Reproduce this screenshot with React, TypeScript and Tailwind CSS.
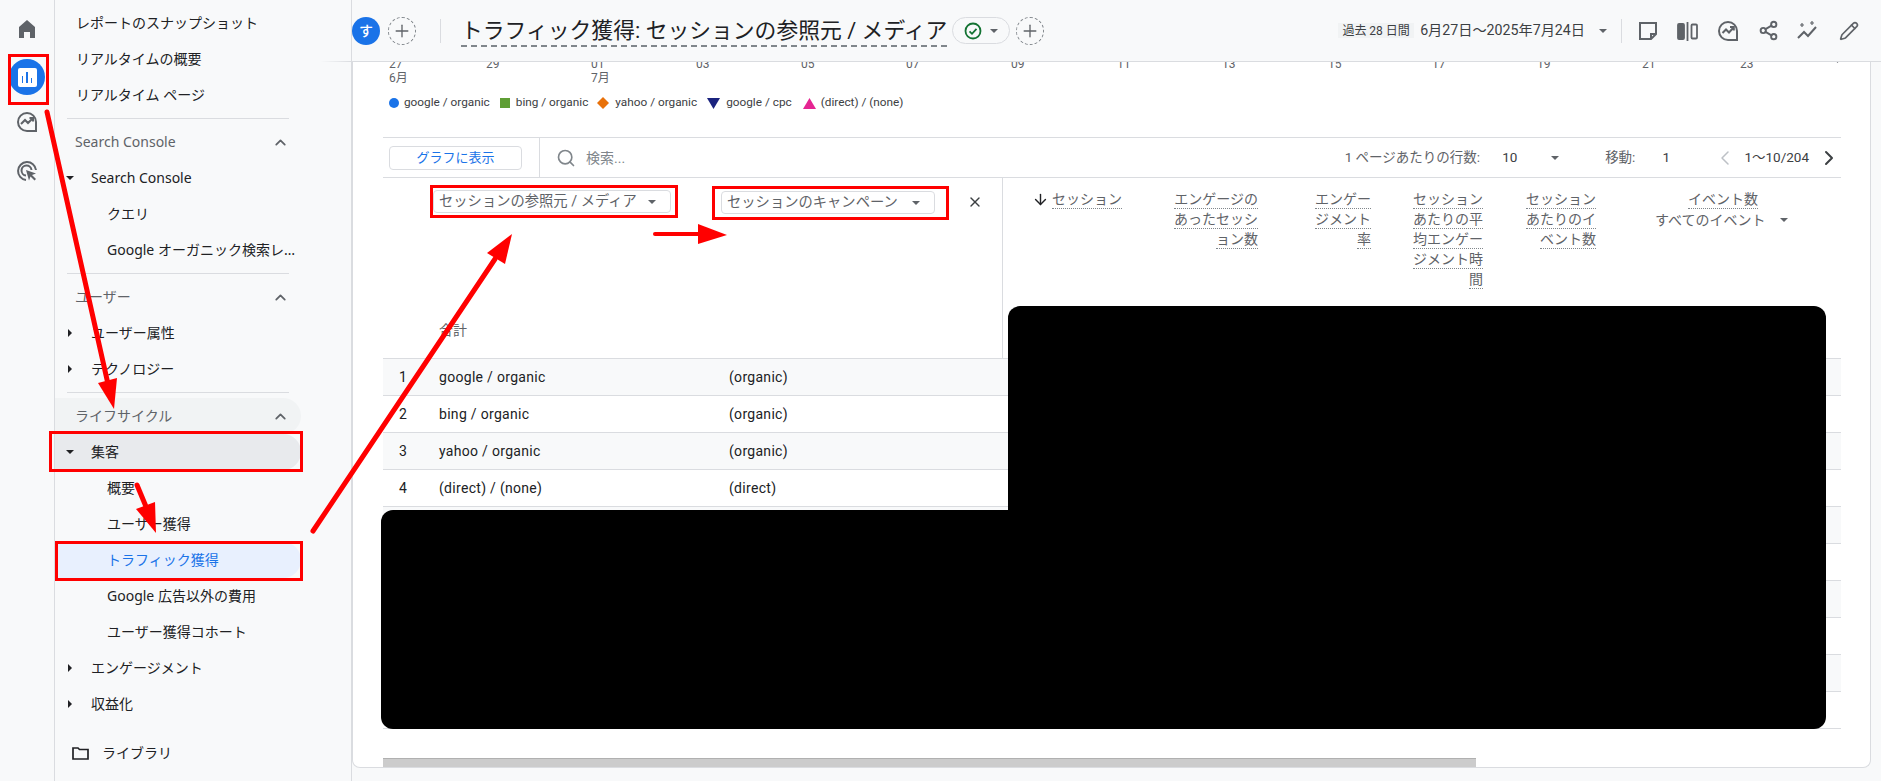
import { ArrowDown, ChevronDown, ChevronLeft, ChevronRight, ChevronUp, Pencil, Plus, Search, Share2, X } from "lucide-react";

const Caret = ({ right = false, cls = "text-[#5f6368]" }: { right?: boolean; cls?: string }) => (
  <svg width="10" height="10" viewBox="0 0 10 10" className={`shrink-0 ${cls}`}>
    {right ? <path d="M3 1l4 4-4 4z" fill="currentColor" /> : <path d="M1 3h8L5 7z" fill="currentColor" />}
  </svg>
);

function Row({ text, level = 0, caret, cls = "" }: { text: string; level?: number; caret?: "down" | "right"; cls?: string }) {
  return (
    <div className={`flex h-9 w-[246px] items-center rounded-r-full text-sm text-[#202124] ${cls}`}>
      {caret ? (
        <span className="ml-[10px] w-[26px]">
          <Caret right={caret === "right"} cls="text-[#202124]" />
        </span>
      ) : (
        <span className={level === 2 ? "w-[52px]" : "w-[21px]"} />
      )}
      <span className="truncate">{text}</span>
    </div>
  );
}

function Section({ text, cls = "" }: { text: string; cls?: string }) {
  return (
    <div className={`flex h-9 w-[246px] items-center justify-between rounded-r-full pl-[20px] pr-[12px] text-sm text-[#5f6368] ${cls}`}>
      <span>{text}</span>
      <ChevronUp size={17} strokeWidth={2.5} />
    </div>
  );
}

const Divider = () => <div className="my-[5px] ml-[12px] h-px w-[222px] bg-[#dadce0]" />;

function Sidebar() {
  return (
    <nav className="h-full w-[297px] shrink-0 border-r border-[#dadce0] pt-[5px]">
      <Row text="レポートのスナップショット" />
      <Row text="リアルタイムの概要" />
      <Row text="リアルタイム ページ" />
      <Divider />
      <Section text="Search Console" />
      <Row text="Search Console" caret="down" />
      <Row text="クエリ" level={2} />
      <div className="flex h-9 items-center pl-[52px] text-sm text-[#202124]">
        <span className="w-[189px] truncate">Google オーガニック検索レポート</span>
      </div>
      <Divider />
      <Section text="ユーザー" />
      <Row text="ユーザー属性" caret="right" />
      <Row text="テクノロジー" caret="right" />
      <Divider />
      <Section text="ライフサイクル" cls="bg-[#f1f3f4]" />
      <Row text="集客" caret="down" cls="bg-[#e8eaed]" />
      <Row text="概要" level={2} />
      <Row text="ユーザー獲得" level={2} />
      <Row text="トラフィック獲得" level={2} cls="bg-[#e8f0fe] !text-[#1a73e8]" />
      <Row text="Google 広告以外の費用" level={2} />
      <Row text="ユーザー獲得コホート" level={2} />
      <Row text="エンゲージメント" caret="right" />
      <Row text="収益化" caret="right" />
      <div className="mt-[13px] flex h-9 items-center pl-[17px] text-sm text-[#202124]">
        <svg width="17" height="14" viewBox="0 0 17 14" fill="none" stroke="#202124" strokeWidth="1.7">
          <path d="M1 2h5l1.5 1.5H16V13H1z" />
        </svg>
        <span className="ml-[13px]">ライブラリ</span>
      </div>
    </nav>
  );
}

function Rail() {
  return (
    <aside className="flex h-full w-[55px] shrink-0 flex-col items-center border-r border-[#dadce0]">
      <svg width="24" height="24" viewBox="0 0 24 24" className="mt-[17px]" fill="#5f6368">
        <path d="M4 21V10l8-7 8 7v11h-5v-6H9v6z" />
      </svg>
      <div className="mt-[18px] flex h-[36px] w-[36px] items-center justify-center rounded-full bg-[#1a73e8]">
        <div className="flex h-[19px] w-[19px] items-end justify-center gap-[3px] rounded-[2px] bg-white pb-[4px]">
          <span className="h-[7px] w-[1.5px] bg-[#1a73e8]" />
          <span className="h-[11px] w-[1.5px] bg-[#1a73e8]" />
          <span className="h-[5px] w-[1.5px] bg-[#1a73e8]" />
        </div>
      </div>
      <svg width="24" height="24" viewBox="0 0 24 24" className="mt-[15px]" fill="none" stroke="#5f6368" strokeWidth="2">
        <path d="M21 20v-8a9 9 0 1 0-9 9h9z" />
        <path d="M6 14l4-4 3 3 5-5M14.500 8H18v3.500" />
      </svg>
      <svg width="24" height="24" viewBox="0 0 24 24" className="mt-[25px]" fill="none" stroke="#5f6368" strokeWidth="2">
        <path d="M21 11a9 9 0 1 0-10 10" />
        <path d="M16.500 11a5 5 0 1 0-5.500 5.500" />
        <path d="M11 11l10 3.500-4 1.500 4 4-1.500 1.500-4-4-1.500 4z" fill="#5f6368" stroke="none" />
      </svg>
    </aside>
  );
}

function DashedPlus() {
  return (
    <div className="flex h-[28px] w-[28px] shrink-0 items-center justify-center rounded-full border border-dashed border-[#80868b] text-[#5f6368]">
      <Plus size={20} strokeWidth={1.6} />
    </div>
  );
}

function Header() {
  return (
    <header className="relative flex h-[62px] shrink-0 items-center border-b border-[#dadce0] pr-[22px]">
      <div className="absolute -left-[32px] -bottom-px h-px w-[32px] bg-gradient-to-r from-transparent to-[#dadce0]" />
      <div className="flex h-[28px] w-[28px] shrink-0 items-center justify-center rounded-full bg-[#1a73e8] text-sm font-medium text-white">す</div>
      <div className="ml-[8px]">
        <DashedPlus />
      </div>
      <div className="ml-[24px] h-[24px] w-px bg-[#dadce0]" />
      <h1 className="ml-[20px] mt-[2px] border-b-2 border-dashed border-[#80868b] text-[21.8px] leading-[28px] whitespace-nowrap text-[#202124]">
        トラフィック獲得: セッションの参照元 / メディア
      </h1>
      <div className="ml-[5px] flex h-[27px] w-[58px] items-center justify-center gap-[7px] rounded-full border border-[#dadce0]">
        <svg width="18" height="18" viewBox="0 0 18 18" fill="none" stroke="#137333" strokeWidth="1.8">
          <circle cx="9" cy="9" r="7.500" />
          <path d="M5.500 9.300l2.500 2.500 4.500-5" />
        </svg>
        <Caret />
      </div>
      <div className="ml-[6px]">
        <DashedPlus />
      </div>
      <div className="ml-auto flex items-center">
        <span className="flex h-[15px] w-[76px] items-center justify-center bg-[#f1f3f4] text-xs text-[#3c4043]">過去 28 日間</span>
        <span className="ml-[6px] whitespace-nowrap text-[14.2px] text-[#3c4043]">6月27日〜2025年7月24日</span>
        <span className="ml-[13px]">
          <Caret />
        </span>
        <div className="ml-[13px] h-[24px] w-px bg-[#dadce0]" />
        <svg width="20" height="20" viewBox="0 0 20 20" className="ml-[16px]" fill="none" stroke="#5f6368" strokeWidth="2">
          <path d="M2 2h16v11l-5 5H2zM18 13h-5v5" />
        </svg>
        <svg width="22" height="20" viewBox="0 0 22 20" className="ml-[19px]" fill="none" stroke="#5f6368" strokeWidth="1.800">
          <rect x="1" y="3" width="6" height="15" rx="1" fill="#5f6368" />
          <path d="M10.500 1v19" />
          <rect x="14.500" y="3.500" width="5.500" height="14" rx="1" />
        </svg>
        <svg width="22" height="22" viewBox="0 0 22 22" className="ml-[18px]" fill="none" stroke="#5f6368" strokeWidth="2">
          <path d="M20 19.500V11a9 9 0 1 0-9 9h9z" />
          <path d="M5.500 13l3.500-3.500 3 3 4.500-5M13 7h3.800v3.500" />
        </svg>
        <Share2 size={21} color="#5f6368" strokeWidth={2.2} className="ml-[19px]" />
        <svg width="24" height="22" viewBox="0 0 24 22" className="ml-[17px]" fill="none" stroke="#5f6368" strokeWidth="2">
          <path d="M2 18l6-6 4 4 8-9" />
          <path d="M6 3v4M4 5h4M16 1v4M14 3h4" strokeWidth="1.200" />
        </svg>
        <Pencil size={20} color="#5f6368" strokeWidth={2} className="ml-[19px]" />
      </div>
    </header>
  );
}

const ticks = [
  { d: "27", m: "6月", w: "w-[97px]" },
  { d: "29", w: "w-[105px]" },
  { d: "01", m: "7月", w: "w-[105px]" },
  { d: "03", w: "w-[105px]" },
  { d: "05", w: "w-[105px]" },
  { d: "07", w: "w-[105px]" },
  { d: "09", w: "w-[106px]" },
  { d: "11", w: "w-[105px]" },
  { d: "13", w: "w-[106px]" },
  { d: "15", w: "w-[104px]" },
  { d: "17", w: "w-[105px]" },
  { d: "19", w: "w-[105px]" },
  { d: "21", w: "w-[98px]" },
  { d: "23", w: "w-[90px]" },
];

function Axis() {
  return (
    <div className="-mt-[5px] flex h-[28px] pl-[36px] text-xs leading-[14px] text-[#5f6368]">
      {ticks.map((t) => (
        <div key={t.d} className={t.w}>
          <div>{t.d}</div>
          {t.m && <div>{t.m}</div>}
        </div>
      ))}
      <ChevronDown size={9} strokeWidth={2} className="ml-[3px]" />
    </div>
  );
}

function Legend() {
  return (
    <div className="mt-[10px] flex h-[16px] items-center pl-[36px] text-[11.8px] text-[#3c4043]">
      <span className="h-[10px] w-[10px] rounded-full bg-[#1a73e8]" />
      <span className="ml-[5px]">google / organic</span>
      <span className="ml-[10px] h-[10px] w-[10px] bg-[#5f9e35]" />
      <span className="ml-[6px]">bing / organic</span>
      <svg width="12" height="12" viewBox="0 0 12 12" className="ml-[9px]">
        <path d="M6 0l6 6-6 6-6-6z" fill="#e8710a" />
      </svg>
      <span className="ml-[6px]">yahoo / organic</span>
      <svg width="13" height="11" viewBox="0 0 13 11" className="ml-[10px]">
        <path d="M0 0h13L6.500 11z" fill="#1a237e" />
      </svg>
      <span className="ml-[6px]">google / cpc</span>
      <svg width="13" height="11" viewBox="0 0 13 11" className="ml-[11px]">
        <path d="M0 11h13L6.500 0z" fill="#e52592" />
      </svg>
      <span className="ml-[5px]">(direct) / (none)</span>
    </div>
  );
}

function Toolbar() {
  return (
    <div className="mt-[26px] flex h-[41px] items-center border-y border-[#dadce0] text-[13.5px] text-[#5f6368]">
      <button className="ml-[6px] h-[24px] w-[133px] rounded-[4px] border border-[#dadce0] text-[13px] text-[#1a73e8]">グラフに表示</button>
      <div className="ml-[17px] h-full w-px bg-[#dadce0]" />
      <Search size={20} strokeWidth={2} color="#80868b" className="ml-[16px]" />
      <span className="ml-[10px] text-sm text-[#80868b]">検索...</span>
      <div className="ml-auto flex items-center">
        <span>1 ページあたりの行数:</span>
        <span className="ml-[22px] w-[48px] text-[#3c4043]">10</span>
        <Caret />
        <span className="ml-[45px]">移動:</span>
        <span className="ml-[27px] w-[51px] text-[#3c4043]">1</span>
        <ChevronLeft size={24} strokeWidth={1.5} color="#bdc1c6" />
        <span className="ml-[7px] text-[#3c4043]">1〜10/204</span>
        <ChevronRight size={24} strokeWidth={2} color="#3c4043" className="ml-[8px]" />
      </div>
    </div>
  );
}

function HeadCell({ lines, w, arrow }: { lines: string[]; w: string; arrow?: boolean }) {
  return (
    <div className={`flex shrink-0 flex-col items-end ${w}`}>
      {lines.map((l, i) => (
        <div key={l} className="flex items-center">
          {arrow && i === 0 && <ArrowDown size={17} strokeWidth={2} color="#202124" className="mr-[3px]" />}
          <span className="h-[20px] border-b border-dotted border-[#80868b] text-sm leading-[20px] whitespace-nowrap text-[#5f6368]">{l}</span>
        </div>
      ))}
    </div>
  );
}

function Chip({ text, cls }: { text: string; cls: string }) {
  return (
    <div className={`flex h-[23px] shrink-0 items-center justify-between rounded-[4px] border border-[#dadce0] pl-[5px] pr-[13px] text-[14.3px] whitespace-nowrap text-[#5f6368] ${cls}`}>
      <span>{text}</span>
      <Caret />
    </div>
  );
}

function TableHead() {
  return (
    <div className="flex h-[181px] border-b border-[#dadce0]">
      <div className="relative flex h-full w-[620px] shrink-0 flex-col border-r border-[#dadce0]">
        <div className="flex items-start pl-[50px] pt-[12px]">
          <Chip text="セッションの参照元 / メディア" cls="w-[238px]" />
          <Chip text="セッションのキャンペーン" cls="ml-[50px] mt-[1px] w-[214px]" />
          <X size={16} strokeWidth={2} color="#3c4043" className="ml-[32px] mt-[4px]" />
        </div>
        <span className="mt-auto mb-[18px] ml-[56px] text-sm text-[#5f6368]">合計</span>
      </div>
      <div className="flex flex-1 pt-[11px]">
        <HeadCell w="w-[119px]" arrow lines={["セッション"]} />
        <HeadCell w="w-[136px]" lines={["エンゲージの", "あったセッシ", "ョン数"]} />
        <HeadCell w="w-[113px]" lines={["エンゲー", "ジメント", "率"]} />
        <HeadCell w="w-[112px]" lines={["セッション", "あたりの平", "均エンゲー", "ジメント時", "間"]} />
        <HeadCell w="w-[113px]" lines={["セッション", "あたりのイ", "ベント数"]} />
        <div className="ml-[59px] flex w-[140px] flex-col">
          <div className="ml-[33px] w-fit">
            <span className="block h-[20px] border-b border-dotted border-[#80868b] text-sm leading-[20px] text-[#5f6368]">イベント数</span>
          </div>
          <div className="flex items-center text-sm leading-[22px] text-[#5f6368]">
            すべてのイベント
            <span className="ml-[14px]">
              <Caret />
            </span>
          </div>
        </div>
      </div>
    </div>
  );
}

const rows = [
  ["google / organic", "(organic)"],
  ["bing / organic", "(organic)"],
  ["yahoo / organic", "(organic)"],
  ["(direct) / (none)", "(direct)"],
  ["", ""],
  ["", ""],
  ["", ""],
  ["", ""],
  ["", ""],
  ["", ""],
];

function TableRows() {
  return (
    <div>
      {rows.map((r, i) => (
        <div key={i} className={`flex h-[37px] items-center border-b border-[#dadce0] pb-[1px] text-sm tracking-[0.3px] text-[#202124] ${i % 2 === 0 ? "bg-[#f8f9fa]" : "bg-white"}`}>
          <span className="w-[56px] pl-[16px]">{i < 4 ? i + 1 : ""}</span>
          <span className="w-[290px]">{r[0]}</span>
          <span>{r[1]}</span>
        </div>
      ))}
    </div>
  );
}

function Annotations() {
  return (
    <>
      {/* 黒塗りのマスク */}
      <div className="absolute left-[1008px] top-[306px] h-[423px] w-[818px] rounded-[12px] bg-black" />
      <div className="absolute left-[381px] top-[510px] h-[219px] w-[640px] rounded-l-[12px] bg-black" />
      {/* 赤枠 */}
      <div className="absolute left-[8px] top-[54px] h-[51px] w-[41px] border-[3px] border-[#ff0000]" />
      <div className="absolute left-[49px] top-[431px] h-[41px] w-[254px] border-[3px] border-[#ff0000]" />
      <div className="absolute left-[55px] top-[541px] h-[40px] w-[248px] border-[3px] border-[#ff0000]" />
      <div className="absolute left-[430px] top-[185px] h-[33px] w-[248px] border-[3px] border-[#ff0000]" />
      <div className="absolute left-[712px] top-[186px] h-[34px] w-[237px] border-[3px] border-[#ff0000]" />
      {/* 矢印 */}
      <svg width="1881" height="781" className="pointer-events-none absolute left-0 top-0" fill="#ff0000" stroke="#ff0000">
        <path d="M47 112l61 272" strokeWidth="5" strokeLinecap="round" />
        <path d="M98 383l19-5-3 31z" stroke="none" />
        <path d="M137 485l10 24" strokeWidth="5" strokeLinecap="round" />
        <path d="M136 509l19-7 1 31z" stroke="none" />
        <path d="M313 531l182-272" strokeWidth="5" strokeLinecap="round" />
        <path d="M487 253l18 11 7-30z" stroke="none" />
        <path d="M655 234h45" strokeWidth="4" strokeLinecap="round" />
        <path d="M698 224l29 11-29 9z" stroke="none" />
      </svg>
    </>
  );
}

export default function App() {
  return (
    <div className="relative flex h-[781px] w-[1881px] overflow-hidden bg-[#f8f9fa] font-['Noto_Sans','Noto_Sans_CJK_JP',sans-serif]">
      <Rail />
      <Sidebar />
      <main className="flex min-w-0 flex-1 flex-col font-[Roboto,'Noto_Sans_CJK_JP',sans-serif]">
        <Header />
        <section className="mb-[13px] mr-[10px] flex-1 overflow-hidden rounded-b-[8px] border-x border-b border-[#dadce0] bg-white">
          <Axis />
          <Legend />
          <div className="ml-[30px] mr-[29px]">
            <Toolbar />
            <TableHead />
            <TableRows />
            <div className="mt-[29px] h-[10px] w-[1093px] border-t border-[#b0b0b0] bg-[#cccccc]" />
          </div>
        </section>
      </main>
      <Annotations />
    </div>
  );
}
